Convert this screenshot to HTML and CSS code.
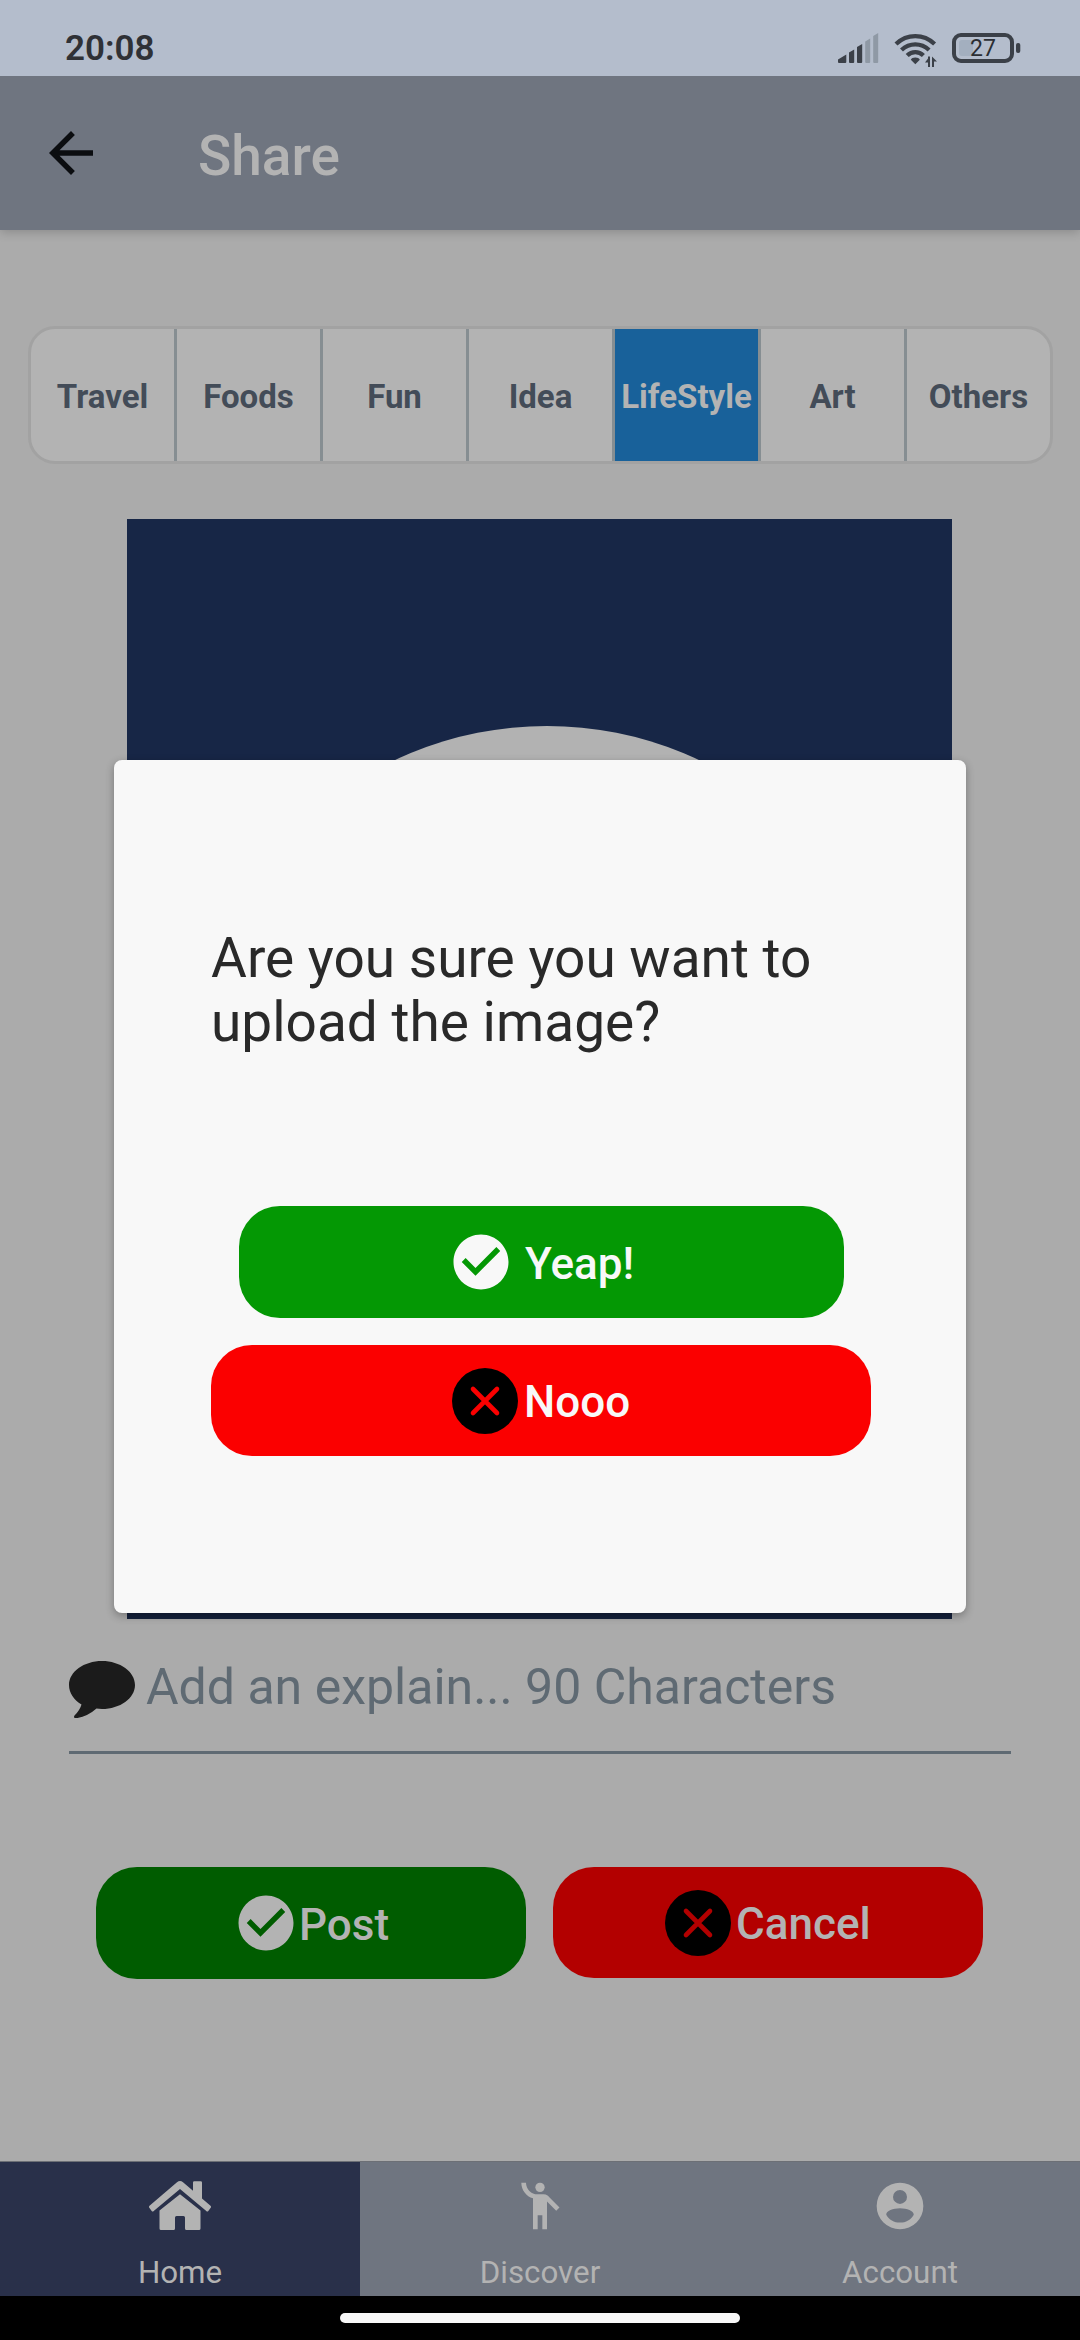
FILE: index.html
```html
<!DOCTYPE html>
<html lang="en">
<head>
<meta charset="utf-8">
<title>Share</title>
<link rel="stylesheet" href="styles.css">
</head>
<body>
<svg class="defs" width="0" height="0">
  <symbol id="check" viewBox="0 0 24 24"><path fill="currentColor" d="M12 2C6.480 2 2 6.480 2 12s4.480 10 10 10 10-4.480 10-10S17.520 2 12 2zm-2 15l-5-5 1.410-1.410L10 14.170l7.590-7.590L19 8l-9 9z"/></symbol>
  <symbol id="cross" viewBox="0 0 66 66"><circle cx="33" cy="33" r="33" fill="#000"/><path d="M21 21l24 24M45 21L21 45" fill="none" stroke="currentColor" stroke-width="4.600" stroke-linecap="round"/></symbol>
</svg>
<div class="phone">
  <div class="status">
    <span class="time">20:08</span>
    <svg class="indicators" width="184" height="36" viewBox="0 0 184 36">
      <g fill="#3b4048">
        <path d="M0 31v-2.500l8.300-5V31a1 1 0 0 1-1 1H1a1 1 0 0 1-1-1zM11 21.500l5.200-3V31a1 1 0 0 1-1 1H12a1 1 0 0 1-1-1zM19 16l5.200-3V31a1 1 0 0 1-1 1H20a1 1 0 0 1-1-1z"/>
        <path fill="#8f99a5" d="M27.200 10.500l5-3V31a1 1 0 0 1-1 1h-3a1 1 0 0 1-1-1zM35.200 5l5-3V31a1 1 0 0 1-1 1h-3a1 1 0 0 1-1-1z"/>
        <path d="M77.300 26.500c2.300 0 3.800.8 4.500 2.200L77.300 33.200l-4.500-4.500C73.500 27.300 75 26.500 77.300 26.500z"/>
        <path d="M92 25.500V36h-2v-4.500h-3l3-4v-2zM94 36V25.500l5 5H96V36z"/>
      </g>
      <g fill="none" stroke="#3b4048" stroke-width="4.300">
        <path d="M58 13c11-10.500 27.600-10.500 38.600 0M63.500 19c8-7.500 19.600-7.500 27.600 0M69.200 24.500c4.600-4.600 11.600-4.600 16.200 0"/>
        <rect x="116" y="4" width="58" height="26" rx="7" stroke-width="4"/>
      </g>
      <rect x="121" y="9" width="14" height="16" rx="3" fill="#a3afbf"/>
      <rect x="178" y="12" width="4.300" height="10" rx="2" fill="#3b4048"/>
      <text x="145" y="25.300" text-anchor="middle" class="level">27</text>
    </svg>
  </div>
  <header class="appbar">
    <svg class="back" viewBox="0 0 24 24"><path fill="#0b0d10" d="M20 11H7.830l5.590-5.590L12 4l-8 8 8 8 1.410-1.410L7.830 13H20v-2z"/></svg>
    <h1>Share</h1>
  </header>
  <main>
    <div class="tabs">
      <div class="tab">Travel</div><div class="tab">Foods</div><div class="tab">Fun</div><div class="tab">Idea</div><div class="tab active">LifeStyle</div><div class="tab">Art</div><div class="tab">Others</div>
    </div>
    <svg class="photo" viewBox="0 0 825 1100"><rect width="825" height="1100" fill="#172646"/><rect y="1090" width="825" height="10" fill="#14213c"/><circle cx="420" cy="563" r="356" fill="#b2b2b2"/></svg>
    <div class="field">
      <svg width="66" height="57" viewBox="0 0 66 57"><path fill="#1b1b1b" d="M33 0C51 0 66 10.700 66 24S51 48 33 48q-3 0-5.500-.4Q18 56 7 57.200 4 57.200 5.500 54.500 11 49 12.500 43.500C5 39 0 32 0 24 0 10.700 15 0 33 0z"/></svg>
      <span>Add an explain... 90 Characters</span>
    </div>
    <div class="actions">
      <div class="btn post"><svg class="ck"><use href="#check"/></svg><span>Post</span></div>
      <div class="btn cancel"><svg class="cx"><use href="#cross"/></svg><span>Cancel</span></div>
    </div>
  </main>
  <nav>
    <div class="item on">
      <svg viewBox="0 0 62 49" class="home"><path fill="currentColor" d="M28 1.200q3-2.400 6 0l10 8.600V1.500Q44 .2 45.300.2h6.400Q53 .2 53 1.500v16l8.500 7.300q1 1 .2 2l-2.400 3.200q-1 1-2 0L31 8 4.700 30q-1 1-2 0L.3 26.800q-.8-1 .2-2zM31 13.300L51.500 29.500V47.500q0 1.500-1.500 1.500H37.500Q36 49 36 47.500V36.500Q36 35 34.500 35h-7Q26 35 26 36.500V47.500Q26 49 24.500 49H12q-1.500 0-1.500-1.500V29.500z"/></svg>
      <span>Home</span>
    </div>
    <div class="item">
      <svg viewBox="0 0 24 24" class="mi"><g fill="currentColor"><circle cx="12" cy="4" r="2"/><path d="M15.890 8.110C15.500 7.720 14.830 7 13.530 7h-2.540C8.240 6.990 6 4.750 6 2H4c0 3.160 2.110 5.840 5 6.710V22h2v-6h2v6h2V10.050L18.950 14l1.410-1.410-4.470-4.480z"/></g></svg>
      <span>Discover</span>
    </div>
    <div class="item">
      <svg viewBox="0 0 24 24" class="mi"><path fill="currentColor" fill-rule="evenodd" d="M12 2a10 10 0 1 0 0 20 10 10 0 0 0 0-20zm0 3.100a3 3 0 1 1 0 6 3 3 0 0 1 0-6zM12 13c3 0 5.900 1.200 5.900 2.700C16.800 17.800 14.500 19.100 12 19.100S7.200 17.800 6.100 15.700C6.100 14.200 9 13 12 13z"/></svg>
      <span>Account</span>
    </div>
  </nav>
  <div class="gesture"><i></i></div>
  <div class="modal">
    <p>Are you sure you want to<br>upload the image?</p>
    <div class="btn yes"><svg class="ck"><use href="#check"/></svg><span>Yeap!</span></div>
    <div class="btn no"><svg class="cx"><use href="#cross"/></svg><span>Nooo</span></div>
  </div>
</div>
</body>
</html>
```
FILE: styles.css
```css
* { box-sizing: border-box; }
body { margin: 0; font-family: Roboto, "Liberation Sans", sans-serif; }
svg { display: block; flex: none; }
.defs { position: absolute; }
.phone { position: relative; width: 1080px; height: 2340px; display: flex; flex-direction: column; background: #ababab; overflow: hidden; }

.status { position: relative; z-index: 1; height: 76px; background: #b4bdcc; display: flex; align-items: center; justify-content: space-between; padding: 22px 58px 0 65px; }
.time { font-size: 35px; font-weight: 600; color: #2f3136; line-height: 40px; }
.level { font-size: 23px; fill: #2b2e33; }

.appbar { height: 154px; background: #6f7580; display: flex; align-items: center; padding-left: 38px; box-shadow: 0 2px 10px rgba(0, 0, 0, .2); }
.back { width: 66px; height: 66px; }
h1 { margin: 6px 0 0 94px; font-size: 55px; font-weight: 500; line-height: 64px; color: #b3b3b3; }

main { flex: 1; display: flex; flex-direction: column; padding-top: 96px; }
.tabs { display: flex; height: 138px; margin: 0 27px 0 28px; border: 3px solid #a2a2a2; border-radius: 27px; background: #b3b3b3; overflow: hidden; }
.tab { flex: 1; display: flex; align-items: center; justify-content: center; padding-top: 2px; font-size: 33px; font-weight: 700; color: #434c58; border-left: 3px solid #868e92; white-space: nowrap; }
.tab:first-child { border-left: 0; flex: none; width: 143px; }
.active { background: #18619a; background-clip: padding-box; color: #b3b3b3; }
.photo { width: 825px; height: 1100px; margin: 55px 0 0 127px; }
.field { display: flex; align-items: center; gap: 11px; height: 135px; margin: 0 69px; padding-top: 4px; border-bottom: 3px solid #5f6a73; font-size: 50px; color: #5f6a73; }
.field svg { margin-top: 5px; }
.actions { display: flex; gap: 27px; margin: 113px 97px 0 96px; }

.btn { display: flex; align-items: center; border-radius: 41px; height: 112px; font-size: 44px; font-weight: 500; color: #f8f8f8; white-space: nowrap; }
.ck { width: 66px; height: 66px; }
.cx { width: 66px; height: 66px; }
.btn span { padding-top: 3px; }
.actions .btn { width: 430px; color: #b3b3b3; }
.post { background: #005c00; padding-left: 137px; }
.cancel { background: #b30000; padding-left: 112px; }
.actions .cancel { height: 111px; }
.cancel span { margin-left: 5px; }
.actions .cancel svg { color: #b30000; }

nav { display: flex; height: 135px; background: #6f7580; border-top: 1px solid #6c6f75; color: #b3b3b3; }
.item { flex: 1; display: flex; flex-direction: column; align-items: center; font-size: 31.3px; line-height: 36px; }
.on { background: #29304a; }
.home { width: 62px; height: 49px; margin: 19px 0 25px; }
.mi { width: 56px; height: 56px; margin: 16px 0 21px; }
.gesture { height: 44px; background: #000; display: flex; justify-content: center; padding-top: 17px; }
.gesture i { width: 400px; height: 10px; border-radius: 5px; background: #f8f8f8; }

.modal { position: absolute; left: 114px; top: 760px; width: 852px; height: 853px; padding: 166px 95px 0 97px; border-radius: 8px; background: #f8f8f8; box-shadow: 0 3px 8px rgba(0, 0, 0, .3); }
.modal p { margin: 0 0 152px; font-size: 55px; line-height: 64px; color: #292929; }
.yes { background: #049804; margin: 0 27px 27px 28px; padding-left: 209px; }
.yes span { margin-left: 11px; }
.no { background: #fb0000; height: 111px; padding-left: 241px; }
.no span { margin-left: 6px; }
.no svg { color: #fb0000; }
```
